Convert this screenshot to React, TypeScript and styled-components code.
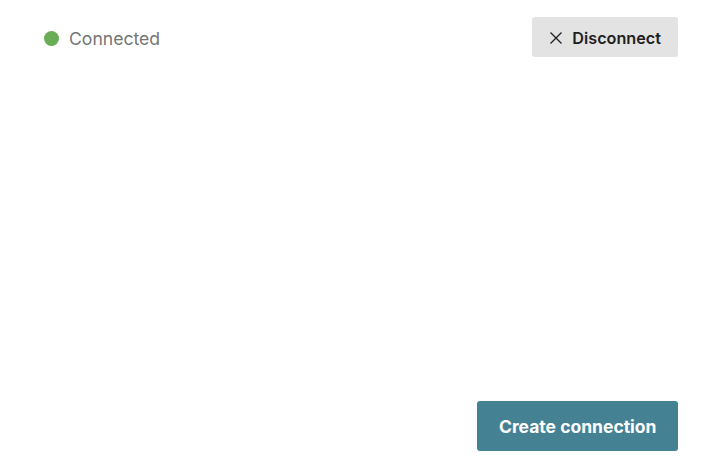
import { createGlobalStyle, styled } from "styled-components";

const GlobalStyle = createGlobalStyle`
  html, body {
    margin: 0;
    padding: 0;
    background: #ffffff;
    font-family: Inter, "Noto Sans", sans-serif;
  }
`;

const Page = styled.div`
  box-sizing: border-box;
  height: 471px;
  padding: 17px 43px 20px 44px;
  display: flex;
  flex-direction: column;
  justify-content: space-between;
`;

const TopBar = styled.div`
  display: flex;
  align-items: center;
  justify-content: space-between;
`;

const Status = styled.div`
  display: flex;
  align-items: center;
  gap: 10px;
  padding-top: 2px;
  font-size: 17.6px;
  color: #757575;
`;

const Dot = styled.span<{ $color: string }>`
  width: 15px;
  height: 15px;
  border-radius: 50%;
  background: ${(p) => p.$color};
`;

const GhostButton = styled.button`
  display: flex;
  align-items: center;
  gap: 9px;
  height: 40px;
  padding: 1px 17px 0 17px;
  border: none;
  border-radius: 3px;
  background: #e3e3e3;
  color: #1f1f1f;
  font-family: Inter, sans-serif;
  font-size: 16.2px;
  font-weight: 600;
`;

const Footer = styled.div`
  display: flex;
  justify-content: flex-end;
`;

const PrimaryButton = styled.button`
  height: 50px;
  padding: 1px 21.5px 0;
  border: none;
  border-radius: 3px;
  background: #448293;
  color: #ffffff;
  font-family: Inter, sans-serif;
  font-size: 17.5px;
  font-weight: 700;
`;

function CloseIcon() {
  return (
    <svg width="14" height="14" viewBox="0 0 14 14" fill="none">
      <path d="M1.5 1.5 L12.5 12.5 M12.5 1.5 L1.5 12.5" stroke="#1f1f1f" strokeWidth="1.3" />
    </svg>
  );
}

export default function App() {
  return (
    <>
      <GlobalStyle />
      <Page>
        <TopBar>
          <Status>
            <Dot $color="#6aad55" />
            Connected
          </Status>
          <GhostButton>
            <CloseIcon />
            Disconnect
          </GhostButton>
        </TopBar>
        <Footer>
          <PrimaryButton>Create connection</PrimaryButton>
        </Footer>
      </Page>
    </>
  );
}
